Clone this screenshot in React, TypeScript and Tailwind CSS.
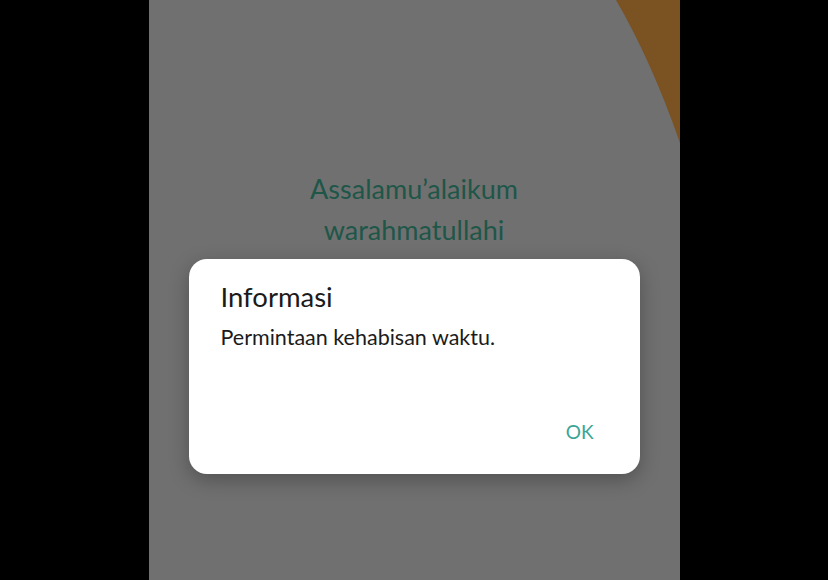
export default function App() {
  return (
    <div className="flex h-[580px] w-full justify-center bg-black" style={{ fontFamily: 'Lato, "Noto Sans", sans-serif' }}>
      <div className="relative h-full w-[531px] overflow-hidden bg-[#707070]">
        <svg className="absolute left-0 top-0" width="531" height="150" viewBox="0 0 531 150">
          <path d="M467 0 Q502.5 61 531 143 L531 0 Z" fill="#7b5221" />
        </svg>

        <div className="flex flex-col items-center pt-[168px] text-[27px] leading-[41px] text-[#1e5648]">
          <p>Assalamu’alaikum</p>
          <p>warahmatullahi</p>
        </div>

        <div className="absolute inset-0 pl-[40px] pt-[259px]">
          <div className="flex h-[215px] w-[451px] flex-col rounded-[18px] bg-white px-[32px] pb-[28px] pt-[22px] shadow-[0_6px_20px_rgba(0,0,0,0.28)]">
            <h2 className="text-[27.5px] leading-[32px] text-[#1b1b1b]">Informasi</h2>
            <p className="mt-[10px] text-[21.5px] leading-[28px] text-[#1b1b1b]">Permintaan kehabisan waktu.</p>
            <div className="mt-auto flex justify-end pr-[14px]">
              <button className="text-[19px] leading-[28px] text-[#3aa596]">OK</button>
            </div>
          </div>
        </div>
      </div>
    </div>
  );
}
